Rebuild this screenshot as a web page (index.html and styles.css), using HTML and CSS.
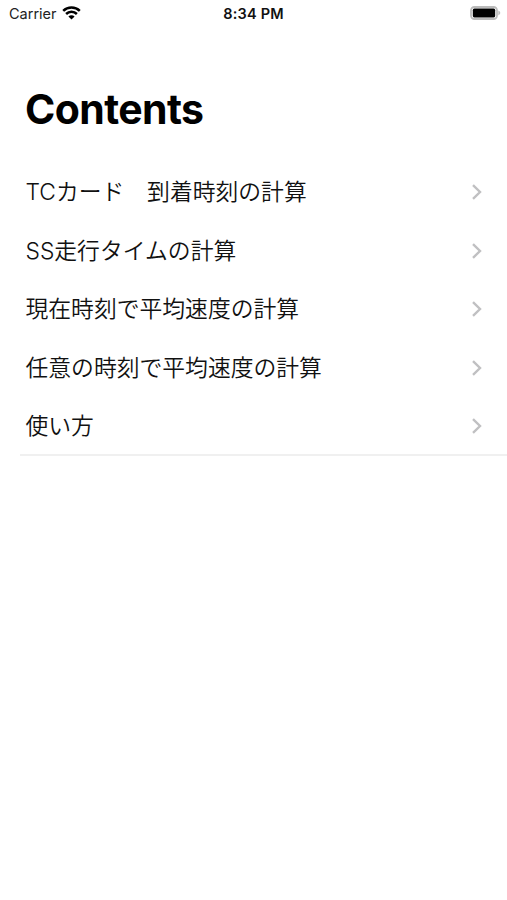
FILE: index.html
```html
<!DOCTYPE html>
<html lang="ja">

<head>
  <title>Contents</title>
  <meta charset="UTF-8">
  <meta name="viewport" content="width=device-width, initial-scale=1">
  <link rel="stylesheet" href="styles.css">
</head>

<body>
  <header class="status-bar">
    <div class="carrier">
      <span>Carrier</span>
      <svg class="wifi" viewBox="0 0 19 14">
        <path d="M1.2 4.9a11.8 11.8 0 0 1 16.6 0" />
        <path d="M4.1 8a7.6 7.6 0 0 1 10.8 0" />
        <path class="dot" d="M9.5 13.6 6.4 10.5a4.4 4.4 0 0 1 6.2 0z" />
      </svg>
    </div>
    <time class="clock">8:34 PM</time>
    <svg class="battery" viewBox="0 0 31 14">
      <rect class="shell" x="1" y="1" width="26" height="12" rx="3.4" />
      <rect x="2.8" y="2.6" width="22.4" height="8.8" rx="1.6" />
      <path class="cap" d="M28.3 4.6c2.6.9 2.6 3.9 0 4.8z" />
    </svg>
  </header>

  <main>
    <h1>Contents</h1>
    <ul class="menu">
      <li><a href="#"><span>TCカード　到着時刻の計算</span><svg class="chevron" viewBox="0 0 10 16"><path d="M1 1.2 8 8l-7 6.8" /></svg></a></li>
      <li><a href="#"><span>SS走行タイムの計算</span><svg class="chevron" viewBox="0 0 10 16"><path d="M1 1.2 8 8l-7 6.8" /></svg></a></li>
      <li><a href="#"><span>現在時刻で平均速度の計算</span><svg class="chevron" viewBox="0 0 10 16"><path d="M1 1.2 8 8l-7 6.8" /></svg></a></li>
      <li><a href="#"><span>任意の時刻で平均速度の計算</span><svg class="chevron" viewBox="0 0 10 16"><path d="M1 1.2 8 8l-7 6.8" /></svg></a></li>
      <li><a href="#"><span>使い方</span><svg class="chevron" viewBox="0 0 10 16"><path d="M1 1.2 8 8l-7 6.8" /></svg></a></li>
    </ul>
  </main>
</body>

</html>
```
FILE: styles.css
```css
body {
  margin: 0;
  background-color: #fff;
  color: #000;
  font-family: Inter, "Noto Sans CJK JP", sans-serif;
}

.status-bar {
  display: grid;
  grid-template-columns: 1fr auto 1fr;
  align-items: center;
  height: 27px;
  padding: 0 6px 0 9px;
}

.carrier {
  display: flex;
  align-items: center;
  gap: 5px;
  color: #222;
  font-size: 14.5px;
}

.wifi {
  width: 19px;
  height: 14px;
  margin-top: -1px;
  fill: none;
  stroke: #000;
  stroke-width: 2.5;
}

.wifi .dot {
  fill: #000;
  stroke: none;
}

.clock {
  margin-left: -3px;
  color: #111;
  font-size: 14.5px;
  font-weight: 600;
  letter-spacing: 0.2px;
}

.battery {
  justify-self: end;
  width: 31px;
  height: 14px;
  margin-top: -1px;
}

.battery .shell {
  fill: none;
  stroke: #bbb;
  stroke-width: 1.8;
}

.battery .cap {
  fill: #bbb;
}

h1 {
  margin: 56px 25px 27.6px;
  font-size: 41px;
  font-weight: 700;
  letter-spacing: -0.6px;
  line-height: 52px;
}

.menu {
  margin: 0 0 0 20px;
  padding: 0;
  list-style: none;
  box-shadow: inset 0 -2px #f0f0f0;
}

.menu a {
  display: flex;
  align-items: center;
  justify-content: space-between;
  height: 58.65px;
  padding: 0 25px 0 5.5px;
  color: #111;
  font-size: 22.8px;
  font-weight: 350;
  text-decoration: none;
}

.menu span {
  margin-top: -3px;
}

.chevron {
  width: 10px;
  height: 16px;
  fill: none;
  stroke: #c0c0c2;
  stroke-width: 2.4;
}
```
